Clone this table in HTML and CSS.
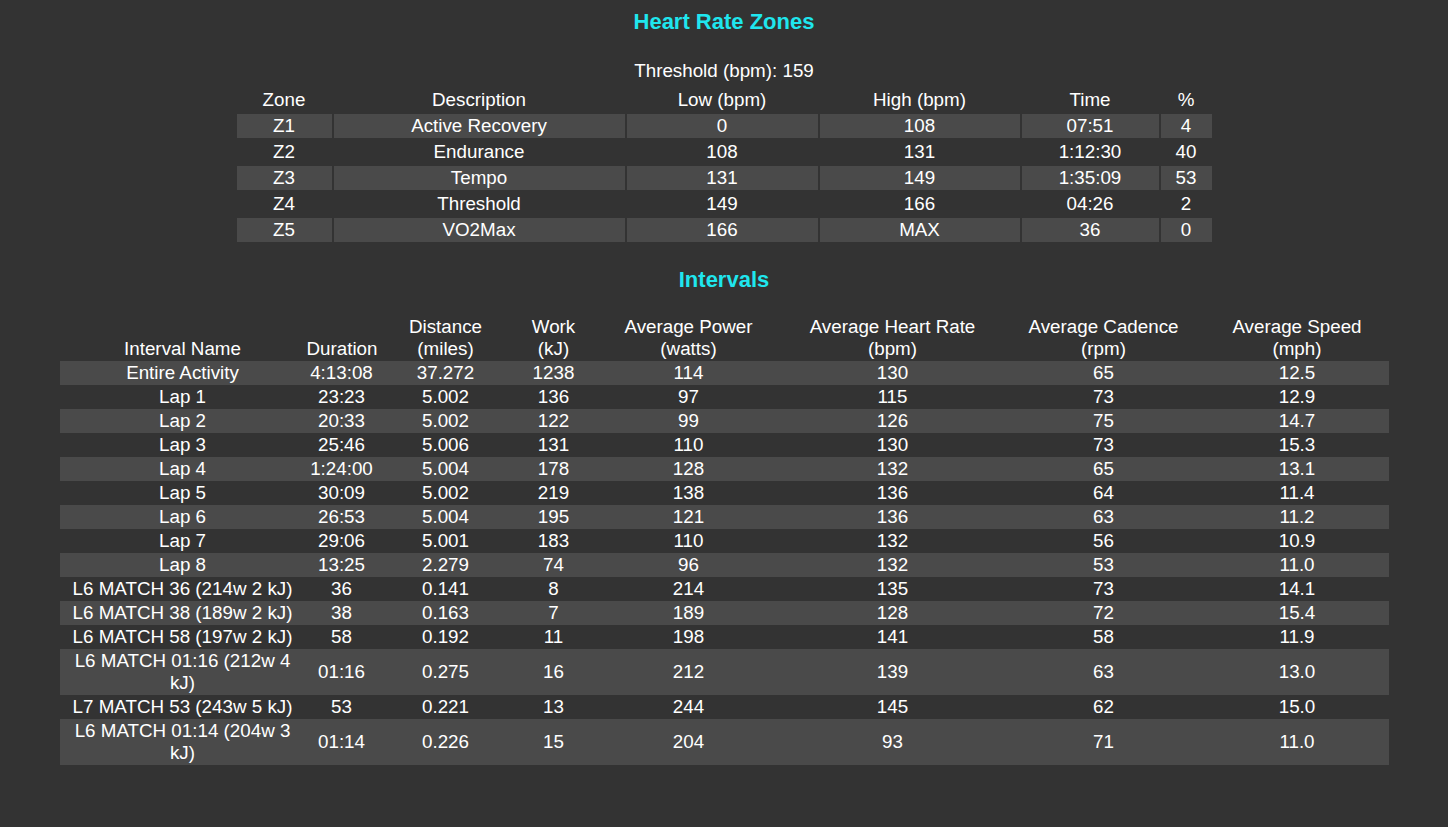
FILE: index.html
```html
<!DOCTYPE html>
<html lang="en">
<head>
<meta charset="utf-8">
<title>Heart Rate Zones &amp; Intervals</title>
<link rel="stylesheet" href="styles.css">
</head>
<body>
<main class="page">
  <h2 class="section-title">Heart Rate Zones</h2>
  <p class="threshold">Threshold (bpm): 159</p>
  <table class="zones">
    <colgroup>
      <col class="z-c1"><col class="z-c2"><col class="z-c3"><col class="z-c4"><col class="z-c5"><col class="z-c6">
    </colgroup>
    <thead>
      <tr><th>Zone</th><th>Description</th><th>Low (bpm)</th><th>High (bpm)</th><th>Time</th><th>%</th></tr>
    </thead>
    <tbody>
      <tr><td>Z1</td><td>Active Recovery</td><td>0</td><td>108</td><td>07:51</td><td>4</td></tr>
      <tr><td>Z2</td><td>Endurance</td><td>108</td><td>131</td><td>1:12:30</td><td>40</td></tr>
      <tr><td>Z3</td><td>Tempo</td><td>131</td><td>149</td><td>1:35:09</td><td>53</td></tr>
      <tr><td>Z4</td><td>Threshold</td><td>149</td><td>166</td><td>04:26</td><td>2</td></tr>
      <tr><td>Z5</td><td>VO2Max</td><td>166</td><td>MAX</td><td>36</td><td>0</td></tr>
    </tbody>
  </table>

  <h2 class="section-title intervals-title">Intervals</h2>
  <table class="intervals">
    <colgroup>
      <col class="i-c1"><col class="i-c2"><col class="i-c3"><col class="i-c4"><col class="i-c5"><col class="i-c6"><col class="i-c7"><col class="i-c8">
    </colgroup>
    <thead>
      <tr>
        <th>Interval Name</th>
        <th>Duration</th>
        <th>Distance<br>(miles)</th>
        <th>Work<br>(kJ)</th>
        <th>Average Power<br>(watts)</th>
        <th>Average Heart Rate<br>(bpm)</th>
        <th>Average Cadence<br>(rpm)</th>
        <th>Average Speed<br>(mph)</th>
      </tr>
    </thead>
    <tbody>
      <tr><td>Entire Activity</td><td>4:13:08</td><td>37.272</td><td>1238</td><td>114</td><td>130</td><td>65</td><td>12.5</td></tr>
      <tr><td>Lap 1</td><td>23:23</td><td>5.002</td><td>136</td><td>97</td><td>115</td><td>73</td><td>12.9</td></tr>
      <tr><td>Lap 2</td><td>20:33</td><td>5.002</td><td>122</td><td>99</td><td>126</td><td>75</td><td>14.7</td></tr>
      <tr><td>Lap 3</td><td>25:46</td><td>5.006</td><td>131</td><td>110</td><td>130</td><td>73</td><td>15.3</td></tr>
      <tr><td>Lap 4</td><td>1:24:00</td><td>5.004</td><td>178</td><td>128</td><td>132</td><td>65</td><td>13.1</td></tr>
      <tr><td>Lap 5</td><td>30:09</td><td>5.002</td><td>219</td><td>138</td><td>136</td><td>64</td><td>11.4</td></tr>
      <tr><td>Lap 6</td><td>26:53</td><td>5.004</td><td>195</td><td>121</td><td>136</td><td>63</td><td>11.2</td></tr>
      <tr><td>Lap 7</td><td>29:06</td><td>5.001</td><td>183</td><td>110</td><td>132</td><td>56</td><td>10.9</td></tr>
      <tr><td>Lap 8</td><td>13:25</td><td>2.279</td><td>74</td><td>96</td><td>132</td><td>53</td><td>11.0</td></tr>
      <tr><td>L6 MATCH 36 (214w 2 kJ)</td><td>36</td><td>0.141</td><td>8</td><td>214</td><td>135</td><td>73</td><td>14.1</td></tr>
      <tr><td>L6 MATCH 38 (189w 2 kJ)</td><td>38</td><td>0.163</td><td>7</td><td>189</td><td>128</td><td>72</td><td>15.4</td></tr>
      <tr><td>L6 MATCH 58 (197w 2 kJ)</td><td>58</td><td>0.192</td><td>11</td><td>198</td><td>141</td><td>58</td><td>11.9</td></tr>
      <tr><td>L6 MATCH 01:16 (212w 4 kJ)</td><td>01:16</td><td>0.275</td><td>16</td><td>212</td><td>139</td><td>63</td><td>13.0</td></tr>
      <tr><td>L7 MATCH 53 (243w 5 kJ)</td><td>53</td><td>0.221</td><td>13</td><td>244</td><td>145</td><td>62</td><td>15.0</td></tr>
      <tr><td>L6 MATCH 01:14 (204w 3 kJ)</td><td>01:14</td><td>0.226</td><td>15</td><td>204</td><td>93</td><td>71</td><td>11.0</td></tr>
    </tbody>
  </table>
</main>
</body>
</html>
```

FILE: styles.css
```css
html, body {
  margin: 0;
  padding: 0;
  background: #333333;
}

body {
  color: #ffffff;
  font-family: "Liberation Sans", Arial, sans-serif;
  font-size: 18.8px;
  line-height: 22px;
}

.page {
  padding-top: 9px;
  padding-bottom: 40px;
  text-align: center;
}

.section-title {
  margin: 0;
  font-size: 22px;
  line-height: 26px;
  font-weight: bold;
  color: #1fe6ee;
}

.threshold {
  margin: 25px 0 4px;
}

table {
  margin-left: auto;
  margin-right: auto;
  table-layout: fixed;
  font-size: inherit;
  color: inherit;
}

th, td {
  padding: 1px;
  text-align: center;
  font-weight: normal;
}

/* Heart rate zones */
.zones {
  width: 979px;
  border-collapse: separate;
  border-spacing: 2px;
}
.zones tbody tr:nth-child(odd) td {
  background: #4a4a4a;
}
.z-c1 { width: 95px; }
.z-c2 { width: 291px; }
.z-c3 { width: 191px; }
.z-c4 { width: 200px; }
.z-c5 { width: 137px; }
.z-c6 { width: 51px; }

/* Intervals */
.intervals-title {
  margin-top: 23px;
  margin-bottom: 22px;
}
.intervals {
  width: 1329px;
  border-collapse: collapse;
  border-spacing: 0;
}
.intervals th {
  vertical-align: bottom;
}
.intervals tbody tr:nth-child(odd) {
  background: #4a4a4a;
}
.i-c1 { width: 246px; }
.i-c2 { width: 72px; }
.i-c3 { width: 136px; }
.i-c4 { width: 80px; }
.i-c5 { width: 190px; }
.i-c6 { width: 218px; }
.i-c7 { width: 204px; }
.i-c8 { width: 183px; }
```
